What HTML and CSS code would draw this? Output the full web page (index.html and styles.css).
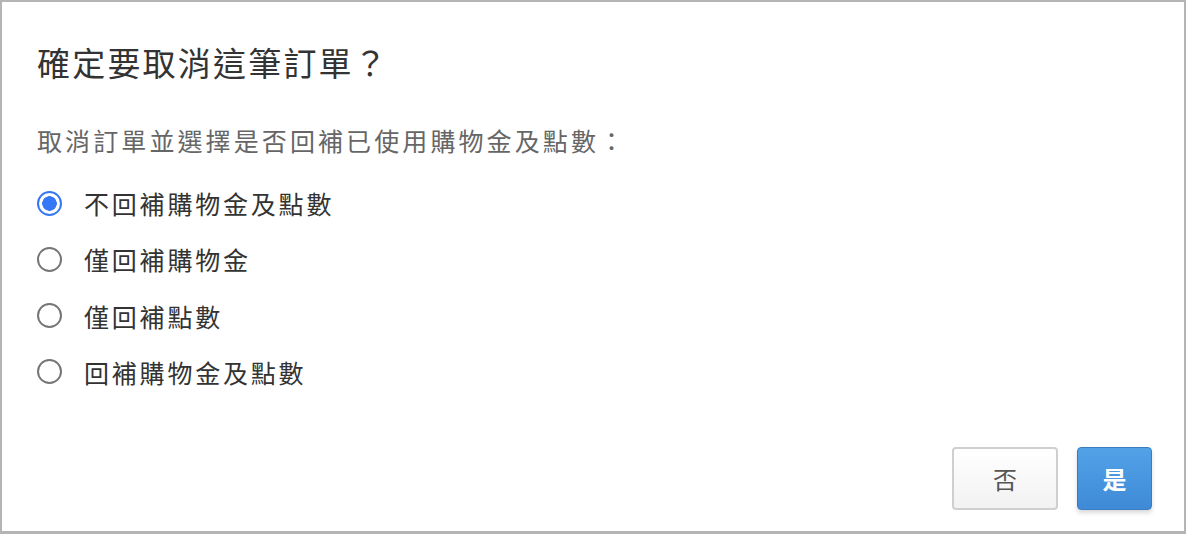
FILE: index.html
```html
<!DOCTYPE html>
<html lang="zh-Hant">
<head>
<meta charset="utf-8">
<title>確定要取消這筆訂單？</title>
<link rel="stylesheet" href="styles.css">
</head>
<body>
<div class="dialog">
  <div class="body">
    <h1 class="title">確定要取消這筆訂單？</h1>
    <p class="desc">取消訂單並選擇是否回補已使用購物金及點數：</p>
    <div class="options">
      <label class="option"><input type="radio" name="r" checked><span>不回補購物金及點數</span></label>
      <label class="option"><input type="radio" name="r"><span>僅回補購物金</span></label>
      <label class="option"><input type="radio" name="r"><span>僅回補點數</span></label>
      <label class="option"><input type="radio" name="r"><span>回補購物金及點數</span></label>
    </div>
  </div>
  <div class="footer">
    <button class="btn btn-no">否</button>
    <button class="btn btn-yes">是</button>
  </div>
</div>
</body>
</html>
```

FILE: styles.css
```css
html, body {
  margin: 0;
  padding: 0;
  background: #fff;
}
body {
  font-family: "Noto Sans CJK TC", "Noto Sans", sans-serif;
}
.dialog {
  box-sizing: border-box;
  width: 1186px;
  height: 534px;
  border: 2px solid #b4b4b4;
  border-bottom-width: 3px;
  display: flex;
  flex-direction: column;
  justify-content: space-between;
}
.body {
  padding: 0 35px;
}
.title {
  margin: 37px 0 0;
  font-size: 33px;
  font-weight: 400;
  line-height: 46px;
  letter-spacing: 2.2px;
  color: #333;
}
.desc {
  margin: 37px 0 0;
  font-size: 25px;
  line-height: 36px;
  letter-spacing: 3.1px;
  color: #666;
}
.options {
  margin-top: 27px;
  display: flex;
  flex-direction: column;
  gap: 20.3px;
}
.option {
  display: flex;
  align-items: center;
  height: 36px;
  font-size: 25px;
  letter-spacing: 2.8px;
  color: #333;
}
.option input {
  appearance: none;
  -webkit-appearance: none;
  box-sizing: border-box;
  width: 25px;
  height: 25px;
  margin: 0 22px 0 0;
  border: 2px solid #767676;
  border-radius: 50%;
  background: #fff;
  flex: none;
}
.option input:checked {
  border-color: #3478f6;
  background: radial-gradient(circle, #3478f6 0 7px, #fff 7.5px);
}
.footer {
  display: flex;
  justify-content: flex-end;
  gap: 19px;
  padding: 0 32px 21px 0;
}
.btn {
  box-sizing: border-box;
  height: 63px;
  font-family: inherit;
  font-size: 24px;
  border-radius: 4px;
  cursor: pointer;
}
.btn-no {
  width: 106px;
  color: #555;
  background: linear-gradient(#fff, #f2f2f2);
  border: 2px solid #cfcfcf;
}
.btn-yes {
  width: 75px;
  color: #fff;
  font-weight: 700;
  background: linear-gradient(#52a2e8, #3f8ad6);
  border: 1px solid #3a7cc0;
  box-shadow: 0 3px 4px rgba(0, 0, 0, 0.15);
}
```
